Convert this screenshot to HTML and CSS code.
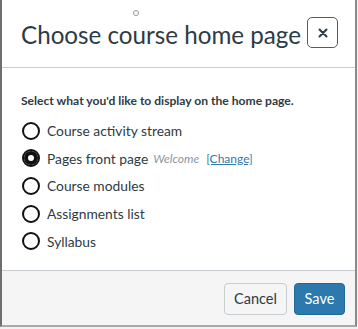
FILE: index.html
```html
<!DOCTYPE html>
<html>
<head>
<meta charset="utf-8">
<link rel="stylesheet" href="styles.css">
</head>
<body>
<div class="dialog">
  <span class="dot"></span>
  <div class="header">
    <h1 class="title">Choose course home page</h1>
    <button class="close" aria-label="Close">
      <svg width="10" height="10" viewBox="0 0 10 10"><path d="M1.5 1.5 L8.5 8.5 M8.5 1.5 L1.5 8.5" stroke="#2d3b45" stroke-width="2" stroke-linecap="round"/></svg>
    </button>
  </div>
  <div class="body">
    <p class="prompt">Select what you'd like to display on the home page.</p>
    <ul class="options">
      <li class="option"><span class="radio"></span><span class="label">Course activity stream</span></li>
      <li class="option"><span class="radio checked"></span><span class="label">Pages front page</span><span class="meta">Welcome</span><a class="change" href="#">[Change]</a></li>
      <li class="option"><span class="radio"></span><span class="label">Course modules</span></li>
      <li class="option"><span class="radio"></span><span class="label">Assignments list</span></li>
      <li class="option"><span class="radio"></span><span class="label">Syllabus</span></li>
    </ul>
  </div>
  <div class="footer">
    <button class="btn cancel">Cancel</button>
    <button class="btn save">Save</button>
  </div>
</div>
</body>
</html>
```
FILE: styles.css
```css
html, body {
  margin: 0;
  padding: 0;
  background: #f2f2f2;
}
body {
  font-family: Lato, "Noto Sans", sans-serif;
  color: #2d3b45;
  width: 358px;
  height: 329px;
  overflow: hidden;
}
.dialog {
  position: relative;
  width: 353px;
  height: 325px;
  background: #fff;
  border-left: 2px solid #6f6f6f;
  border-right: 2px solid #8a8a8a;
  border-bottom: 2px solid #a9a9a9;
  display: flex;
  flex-direction: column;
}
.dot {
  position: absolute;
  left: 131px;
  top: 10px;
  width: 4px;
  height: 4px;
  border: 1px solid #9a9a9a;
  border-radius: 50%;
}
.header {
  height: 68px;
  border-bottom: 1px solid #c7cdd1;
  display: flex;
  align-items: center;
  padding: 0 17px 0 19px;
  box-sizing: border-box;
  flex: none;
}
.title {
  margin: 2px 0 0 0;
  font-size: 24.2px;
  font-weight: 400;
  flex: 1;
  white-space: nowrap;
}
.close {
  flex: none;
  width: 31px;
  height: 31px;
  border: 1.5px solid #555c61;
  border-radius: 5px;
  background: #fff;
  display: flex;
  align-items: center;
  justify-content: center;
  padding: 0;
  margin-top: -2px;
}
.body {
  flex: 1;
  padding: 25px 19px 0 19px;
}
.prompt {
  margin: 0 0 8px 0;
  font-size: 12.1px;
  font-weight: 700;
  line-height: 16px;
}
.options {
  list-style: none;
  margin: 0;
  padding: 0;
}
.option {
  display: flex;
  align-items: center;
  height: 27.6px;
}
.radio {
  width: 14px;
  height: 14px;
  border: 2px solid #111;
  border-radius: 50%;
  margin-left: 1px;
  margin-right: 7px;
  flex: none;
  box-sizing: content-box;
}
.radio.checked {
  background: #fff;
  box-shadow: inset 0 0 0 4px #111;
}
.label {
  font-size: 13.8px;
}
.meta {
  font-size: 12px;
  font-style: italic;
  color: #8b969e;
  margin-left: 5px;
}
.change {
  font-size: 12px;
  color: #2f79ad;
  margin-left: 7px;
}
.footer {
  flex: none;
  height: 55px;
  background: #f5f5f5;
  border-top: 1px solid #c7cdd1;
  display: flex;
  justify-content: flex-end;
  align-items: center;
  gap: 7px;
  padding: 0 10px 1px 0;
  box-sizing: border-box;
}
.btn {
  height: 32px;
  border-radius: 4px;
  font-family: Lato, "Noto Sans", sans-serif;
  font-size: 14.5px;
  padding: 0;
  margin-top: 2px;
}
.cancel {
  background: #f5f5f5;
  color: #2d3b45;
  border: 1px solid #c7cdd1;
  width: 63px;
}
.save {
  background: #2b79ad;
  color: #fff;
  border: 1px solid #22699a;
  width: 51px;
}
```
